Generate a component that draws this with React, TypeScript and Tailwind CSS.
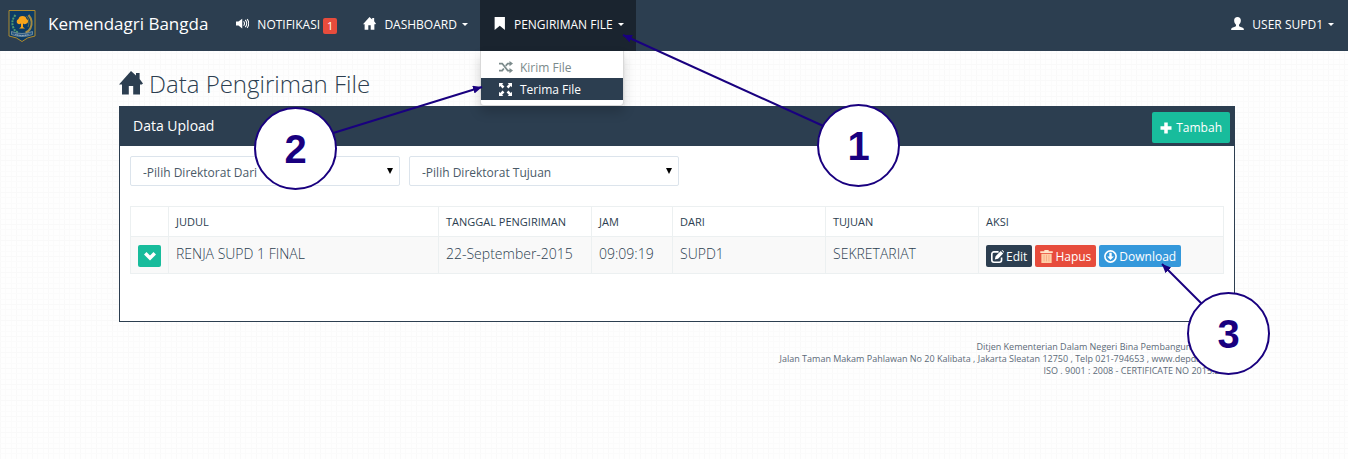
import type { ReactNode } from 'react';

type IconProps = { className?: string };

function Glyph({ className = 'size-3', children }: IconProps & { children: ReactNode }) {
  return (
    <svg viewBox="0 0 24 24" fill="currentColor" aria-hidden="true" className={`inline-block shrink-0 ${className}`}>
      {children}
    </svg>
  );
}

const Home = ({ className }: IconProps) => (
  <Glyph className={className}>
    <path d="M12 0 17 4.600V2h3.600v6L24 12.400 22.800 13.400H21V23.600h-6.800V15H9.800v8.600H3V13.400H0Z" />
  </Glyph>
);
const Volume = ({ className }: IconProps) => (
  <Glyph className={className}>
    <path d="M0 8.500h4.500L11.500 3v18L4.500 15.500H0Z" />
    <path d="M14 8a5.500 5.500 0 0 1 0 8M17 5.500a9 9 0 0 1 0 13M20.500 4a12 12 0 0 1 0 16" fill="none" stroke="currentColor" strokeWidth="2" />
  </Glyph>
);
const Bookmark = ({ className }: IconProps) => (
  <Glyph className={className}>
    <path d="M3 0h19v24l-9.500-8L3 24Z" />
  </Glyph>
);
const User = ({ className }: IconProps) => (
  <Glyph className={className}>
    <path d="M12 0c4 0 6.200 2.600 6.200 6.600 0 3.200-1.500 6-3.400 7.600v2.300c0 1 6 2.500 7.700 4 .9.800 1.300 1.900 1.300 3.500H.2c0-1.600.4-2.700 1.300-3.500 1.700-1.500 7.700-3 7.700-4v-2.300C7.300 12.600 5.800 9.800 5.800 6.600 5.800 2.600 8 0 12 0Z" />
  </Glyph>
);
const Random = ({ className }: IconProps) => (
  <Glyph className={className}>
    <path d="M0 6h5.500L15 18h4M0 18h5.500l2.800-3.500M11.500 10 15 6h4" fill="none" stroke="currentColor" strokeWidth="3" />
    <path d="M18 1.500 24 6l-6 4.500ZM18 13.500l6 4.500-6 4.500Z" />
  </Glyph>
);
const Fullscreen = ({ className }: IconProps) => (
  <Glyph className={className}>
    <path d="M0 0h8L5.700 2.300 10 6.600 6.600 10 2.300 5.700 0 8ZM24 0v8l-2.300-2.300L17.400 10 14 6.600l4.300-4.300L16 0ZM0 24v-8l2.300 2.300L6.600 14l3.400 3.400-4.300 4.300L8 24ZM24 24h-8l2.300-2.300L14 17.400l3.400-3.400 4.300 4.300L24 16Z" />
  </Glyph>
);
const Plus = ({ className }: IconProps) => (
  <Glyph className={className}>
    <path d="M8.500 1h7v7.500H23v7h-7.500V23h-7v-7.500H1v-7h7.500Z" />
  </Glyph>
);
const ChevronDown = ({ className }: IconProps) => (
  <Glyph className={className}>
    <path d="m5 4 7 7 7-7 5 5-12 12L0 9Z" />
  </Glyph>
);
const Edit = ({ className }: IconProps) => (
  <Glyph className={className}>
    <path d="M14 3.500H5.500a4 4 0 0 0-4 4v11a4 4 0 0 0 4 4h10a4 4 0 0 0 4-4V14" fill="none" stroke="currentColor" strokeWidth="3" />
    <path d="m18 2 4.500 4.500-9.500 9.500-6 1.500L8.500 11.500ZM19.500.5 21 0l3 3-.5 2Z" />
  </Glyph>
);
const Trash = ({ className }: IconProps) => (
  <Glyph className={className}>
    <path d="M8 0h8v2.500h7.500v3H.5v-3H8Z" fill="#ffe4c8" />
    <path d="M2.500 7h19v17h-19Z" fill="#ffcfa6" />
    <path d="M7.500 9v12M12 9v12M16.500 9v12" stroke="#f6a583" strokeWidth="1.500" />
  </Glyph>
);
const DownloadCircle = ({ className }: IconProps) => (
  <Glyph className={className}>
    <circle cx="12" cy="12" r="10.300" fill="none" stroke="currentColor" strokeWidth="3" />
    <path d="M9.800 5h4.400v7h4L12 18.500 5.800 12h4Z" />
  </Glyph>
);

const Caret = () => <span aria-hidden="true" className="ml-[5px] inline-block border-x-3 border-t-3 border-x-transparent border-t-current" />;

function Emblem() {
  return (
    <svg viewBox="0 0 27 32" className="h-8 w-7 shrink-0" role="img" aria-label="Kemendagri">
      <path d="M.5.500h26v25.500q-8 1-13 5.500Q8.500 27 .5 26Z" fill="#0d3c66" stroke="#b08b2c" />
      <path d="M7 5Q2 11 5 18q1.500 3.500 5 4.500" fill="none" stroke="#4f9a70" strokeWidth="2" strokeDasharray="2 1" />
      <path d="M20 5q5 6 2 13-1.500 3.500-5 4.500" fill="none" stroke="#a18a45" strokeWidth="2" />
      <path d="M18 6q4 5 1.500 11" fill="none" stroke="#65704c" />
      <path d="M8.500 13q-1-3 1.500-4 .5-3 4-3t4 3q2.500 1 1 4-2.500 2-4.500.5V17l2 1.500h-6l2-1.500v-3.500Q10 15 8.500 13Z" fill="#f8a51b" />
      <path d="M3 21.500q10.500 4 21 0v3q-10.500 4-21 0Z" fill="#285783" stroke="#8fa3a8" strokeWidth=".7" />
      <path d="M7 24.500q6.500 2 13 0" fill="none" stroke="#c5ced4" strokeWidth="1" strokeDasharray="1 .6" />
    </svg>
  );
}

const navIcon = 'mr-2 mb-[2px] size-[13px]';

function Navbar() {
  return (
    <header className="flex h-[51px] items-stretch justify-between bg-[#2c3e50] text-white">
      <div className="flex">
        <a href="#" className="flex items-center gap-3 pl-2 text-[17px]">
          <Emblem />
          <span className="pb-1">Kemendagri Bangda</span>
        </a>
        <nav className="ml-[14px] flex text-[12px]">
          <a href="#" className="flex items-center px-[14px] pb-[2px]">
            <Volume className={navIcon} />
            NOTIFIKASI
            <span className="mt-[2px] ml-[3px] rounded-xs bg-[#e74c3c] px-1 text-[11px] leading-4">1</span>
          </a>
          <a href="#" className="flex items-center pr-3 pb-[2px] pl-3">
            <Home className={navIcon} />
            DASHBOARD
            <Caret />
          </a>
          <div className="relative flex">
            <button type="button" className="flex items-center bg-[#1a242f] pr-3 pb-[2px] pl-[13px]">
              <Bookmark className={navIcon} />
              PENGIRIMAN FILE
              <Caret />
            </button>
            <ul className="absolute top-full left-0 z-10 w-36 rounded-b border border-t-0 border-black/15 bg-white py-[5px] text-[12px] shadow-[0_6px_12px_rgba(0,0,0,0.18)]">
              <li>
                <a href="#" className="flex h-[22px] items-center gap-[7px] px-[18px] pt-[2px] text-[#7b8a8b]">
                  <Random className="mb-[2px] size-[14px]" />
                  Kirim File
                </a>
              </li>
              <li>
                <a href="#" className="flex h-[22px] items-center gap-2 bg-[#2c3e50] px-[18px] pt-[2px] text-white">
                  <Fullscreen className="mb-[2px] size-[13px]" />
                  Terima File
                </a>
              </li>
            </ul>
          </div>
        </nav>
      </div>
      <button type="button" className="flex items-center pr-[14px] pb-[2px] text-[12px]">
        <User className={navIcon} />
        USER SUPD1
        <Caret />
      </button>
    </header>
  );
}

function Filter({ label }: { label: string }) {
  return (
    <div className="relative w-[270px]">
      <select aria-label={label} className="h-[30px] w-full appearance-none rounded-xs border border-[#dce4ec] bg-white px-3 pt-1 text-[12px] text-[#4a5a68]">
        <option>{label}</option>
      </select>
      <svg viewBox="0 0 6 6" aria-hidden="true" className="pointer-events-none absolute top-3 right-[7px] size-[6px]">
        <path d="M0 0h6L3 6Z" />
      </svg>
    </div>
  );
}

const actionClass = 'flex h-[22px] items-center gap-[2px] rounded-xs px-[5px] pt-[2px] text-[12px] text-white';
const actionIcon = 'mb-[2px] size-[13px]';
const columns = ['', 'JUDUL', 'TANGGAL PENGIRIMAN', 'JAM', 'DARI', 'TUJUAN', 'AKSI'];
const cells = ['RENJA SUPD 1 FINAL', '22-September-2015', '09:09:19', 'SUPD1', 'SEKRETARIAT'];

function UploadTable() {
  return (
    <table className="mt-5 w-full table-fixed border-collapse text-left text-[#2c3e50]">
      <colgroup>
        <col className="w-[38px]" />
        <col className="w-[270px]" />
        <col className="w-[14%]" />
        <col className="w-[81px]" />
        <col className="w-[14%]" />
        <col className="w-[14%]" />
        <col />
      </colgroup>
      <thead>
        <tr className="h-[30px] text-[11px]">
          {columns.map((name) => (
            <th key={name} className="border border-[#ecf0f1] px-[7px] pt-[2px] font-medium">{name}</th>
          ))}
        </tr>
      </thead>
      <tbody>
        <tr className="h-[37px] bg-[#f9f9f9] text-[14px]">
          <td className="border border-[#ecf0f1] px-[7px] pt-[2px]">
            <button type="button" aria-label="Detail" className="flex h-[22px] w-[23px] items-center justify-center rounded-xs bg-[#18bc9c] text-white">
              <ChevronDown className="size-3" />
            </button>
          </td>
          {cells.map((text) => (
            <td key={text} className="border border-[#ecf0f1] px-[7px] pb-1 font-light whitespace-nowrap">{text}</td>
          ))}
          <td className="border border-[#ecf0f1] px-[7px] pt-[2px]">
            <div className="flex gap-[3px]">
              <button type="button" className={`${actionClass} bg-[#2c3e50]`}><Edit className={actionIcon} />Edit</button>
              <button type="button" className={`${actionClass} bg-[#e74c3c]`}><Trash className={actionIcon} />Hapus</button>
              <button type="button" className={`${actionClass} bg-[#3498db]`}><DownloadCircle className={actionIcon} />Download</button>
            </div>
          </td>
        </tr>
      </tbody>
    </table>
  );
}

function Callouts() {
  const circle = 'absolute flex size-[83px] items-center justify-center rounded-full border-2 border-[#19007f] bg-white font-["Liberation_Sans",sans-serif] text-[40px] font-bold text-[#19007f]';
  return (
    <div className="pointer-events-none absolute top-0 left-0 z-20">
      <svg width="1348" height="459" className="absolute max-w-none" stroke="#19007f" strokeWidth="2" aria-hidden="true">
        <defs>
          <marker id="tip" markerWidth="10" markerHeight="8" refX="9" refY="4" orient="auto" markerUnits="userSpaceOnUse">
            <path d="M0 0 9 4 0 8Z" fill="#19007f" stroke="none" />
          </marker>
        </defs>
        <path d="M830 129 623 35" markerEnd="url(#tip)" />
        <path d="M330 134 482 87" markerEnd="url(#tip)" />
        <path d="M1205 307 1162 264" markerEnd="url(#tip)" />
      </svg>
      <span className={`${circle} top-[104px] left-[817px]`}>1</span>
      <span className={`${circle} top-[107px] left-[254px]`}>2</span>
      <span className={`${circle} top-[292px] left-[1187px]`}>3</span>
    </div>
  );
}

export default function App() {
  return (
    <div className="relative min-h-screen overflow-hidden bg-[#fefefe] bg-[linear-gradient(#f9f9f9_1px,transparent_1px_5px,#fbfbfb_5px_6px,transparent_6px_11px,#fbfbfb_11px_12px,transparent_12px),linear-gradient(90deg,#f9f9f9_1px,transparent_1px_5px,#fbfbfb_5px_6px,transparent_6px_11px,#fbfbfb_11px_12px,transparent_12px)] bg-size-[16px_16px] font-['Open_Sans',sans-serif] text-[#2c3e50]">
      <Navbar />
      <main className="mx-auto max-w-[1140px] pr-[9px] pl-[15px]">
        <h1 className="flex h-[55px] items-center gap-[6px] pt-[10px] text-[24px] font-light">
          <Home className="mb-[2px] size-6" />
          Data Pengiriman File
        </h1>
        <section className="min-h-[216px] border border-[#2c3e50] bg-white">
          <div className="flex h-[39px] items-center justify-between bg-[#2c3e50] pr-1 pl-[13px] text-white">
            <h2 className="pb-[2px] text-[14px]">Data Upload</h2>
            <button type="button" className="mt-[2px] flex h-[31px] items-center gap-1 rounded-xs bg-[#18bc9c] px-2 text-[12px]">
              <Plus className="size-3" />
              Tambah
            </button>
          </div>
          <div className="p-[10px]">
            <div className="flex gap-[9px]">
              <Filter label="-Pilih Direktorat Dari" />
              <Filter label="-Pilih Direktorat Tujuan" />
            </div>
            <UploadTable />
          </div>
        </section>
        <footer className="pt-[19px] text-right text-[9px] leading-3 text-[#5c6a78]">
          <p>Ditjen Kementerian Dalam Negeri Bina Pembangunan Daerah</p>
          <p>Jalan Taman Makam Pahlawan No 20 Kalibata , Jakarta Sleatan 12750 , Telp 021-794653 , www.depdagri.go.id</p>
          <p>ISO . 9001 : 2008 - CERTIFICATE NO 2015.2015</p>
        </footer>
      </main>
      <Callouts />
    </div>
  );
}
